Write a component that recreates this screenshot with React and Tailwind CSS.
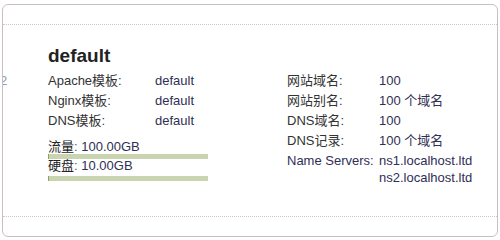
import React from 'react';

const font = { fontFamily: '"Liberation Sans", Arial, "Noto Sans CJK SC", sans-serif' };

const Row = ({ label, value, labelWidth }) => (
  <div className="flex h-5 leading-5">
    <span className={`${labelWidth} text-[#333]`}>{label}</span>
    <span className="text-[#2f2f55]">{value}</span>
  </div>
);

const Bar = ({ className = '' }) => (
  <div className={`flex w-[160px] h-[5px] bg-[#c9d5b1] ${className}`}>
    <div className="w-px h-full bg-[#86a858]"></div>
  </div>
);

export default function App() {
  return (
    <div className="w-[500px] h-[240px] bg-white pt-[4px] pl-[2px]" style={font}>
      <div className="relative w-[496px] h-[233px] border border-[#c9bfbf] rounded-[6px] flex flex-col overflow-hidden">
        <div className="h-[20px] border-b border-dotted border-[#c8c8c8]"></div>
        <div className="flex-1 pl-[45px] pt-[19px] text-[13px]">
          <span className="absolute left-0 top-[66px] w-[5px] overflow-hidden text-[13px] leading-5 text-[#8a9ab8]">
            <span className="block ml-[-3px]">2</span>
          </span>
          <div className="flex">
            <div className="w-[239px]">
              <div className="text-[19px] leading-[24px] font-bold text-[#222] mb-[3px]">default</div>
              <Row label="Apache模板:" value="default" labelWidth="w-[107px]" />
              <Row label="Nginx模板:" value="default" labelWidth="w-[107px]" />
              <Row label="DNS模板:" value="default" labelWidth="w-[107px]" />
              <div className="mt-[9px] leading-[14px]">
                <span className="text-[#222]">流量</span>
                <span className="text-[#555]">: </span>
                <span className="text-[#2f2f55]">100.00GB</span>
              </div>
              <Bar />
              <div className="leading-[14px]">
                <span className="text-[#222]">硬盘</span>
                <span className="text-[#555]">: </span>
                <span className="text-[#2f2f55]">10.00GB</span>
              </div>
              <Bar className="mt-[3px]" />
            </div>
            <div className="pt-[27px]">
              <Row label="网站域名:" value="100" labelWidth="w-[92px]" />
              <Row label="网站别名:" value="100 个域名" labelWidth="w-[92px]" />
              <Row label="DNS域名:" value="100" labelWidth="w-[92px]" />
              <Row label="DNS记录:" value="100 个域名" labelWidth="w-[92px]" />
              <div className="flex">
                <span className="w-[92px] h-5 leading-5 text-[#2f2f55]">Name Servers:</span>
                <div className="text-[#2f2f55]">
                  <div className="h-5 leading-5">ns1.localhost.ltd</div>
                  <div className="leading-[14px]">ns2.localhost.ltd</div>
                </div>
              </div>
            </div>
          </div>
        </div>
        <div className="h-[20px] border-t border-dotted border-[#c8c8c8]"></div>
      </div>
    </div>
  );
}
